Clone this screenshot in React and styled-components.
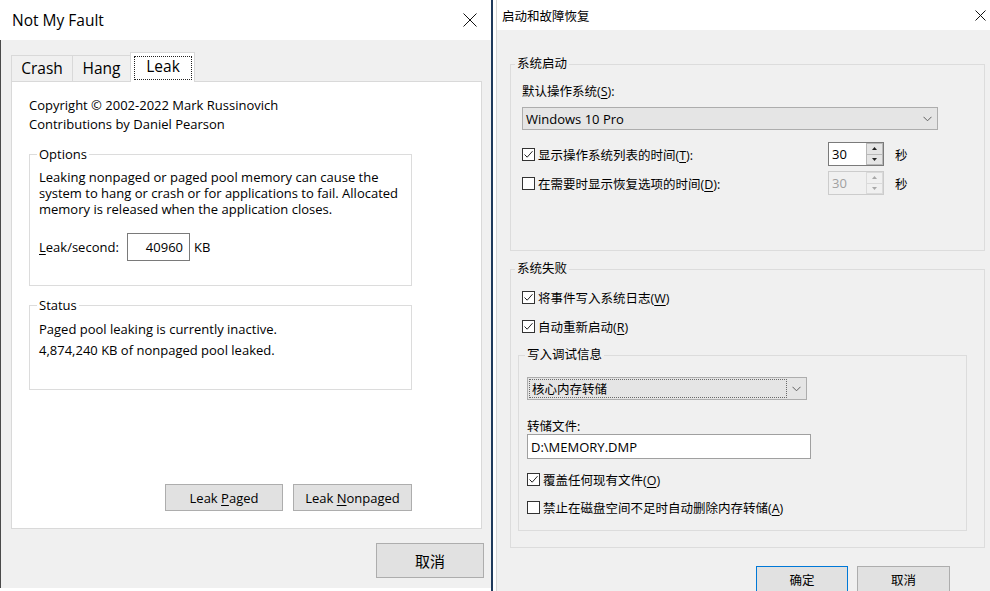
import React from 'react';
import styled, { createGlobalStyle } from 'styled-components';

const FONT = `"Open Sans", "Noto Sans CJK SC", sans-serif`;

const GlobalStyle = createGlobalStyle`
  html, body { margin: 0; padding: 0; background: #fff; }
  body { width: 990px; height: 591px; overflow: hidden; font-family: ${FONT}; color: #000; }
  * { box-sizing: border-box; }
`;

const Screen = styled.div`
  display: flex;
  width: 990px;
  height: 591px;
  background: #fff;
  overflow: hidden;
`;

/* ---------- shared ---------- */
const TitleBar = styled.div`
  height: ${p => p.$h}px;
  flex-shrink: 0;
  background: #fff;
  display: flex;
  align-items: center;
  justify-content: space-between;
  padding-left: ${p => p.$pl}px;
  padding-right: ${p => p.$pr}px;
  font-size: ${p => p.$fs}px;
  white-space: nowrap;
`;

const U = styled.span`
  text-decoration: underline;
  text-underline-offset: 2px;
  text-decoration-thickness: 1px;
`;

const ButtonEl = styled.button`
  width: ${p => p.$w}px;
  height: ${p => p.$h}px;
  background: #e1e1e1;
  border: 1px solid ${p => (p.$default ? '#0078d7' : '#adadad')};
  font-family: ${FONT};
  font-size: ${p => p.$fs}px;
  color: #000;
  padding: 0;
  display: flex;
  align-items: center;
  justify-content: center;
  flex-shrink: 0;
  white-space: pre;
`;

function Button({ children, ...rest }) {
  return (
    <ButtonEl {...rest}>
      <span>{children}</span>
    </ButtonEl>
  );
}

function CloseIcon({ size }) {
  return (
    <svg width={size} height={size} viewBox={`0 0 ${size} ${size}`}>
      <path d={`M0.5 0.5 L${size - 0.5} ${size - 0.5} M${size - 0.5} 0.5 L0.5 ${size - 0.5}`} stroke="#111" strokeWidth="1" fill="none" />
    </svg>
  );
}

/* ---------- left window ---------- */
const LeftWin = styled.div`
  width: 491px;
  height: 588px;
  flex-shrink: 0;
  display: flex;
  flex-direction: column;
  background: #f0f0f0;
`;

const LeftBody = styled.div`
  flex: 1;
  display: flex;
  flex-direction: column;
  border-left: 1px solid #4a4a4a;
`;

const LeftMain = styled.div`
  padding: 12px 9px 0 10px;
  display: flex;
  flex-direction: column;
`;

const TabStrip = styled.div`
  display: flex;
  align-items: flex-start;
  height: 30px;
  margin-bottom: -1px;
  position: relative;
  z-index: 1;
`;

const Tab = styled.div`
  width: ${p => p.$w}px;
  margin-left: ${p => (p.$first ? 0 : -1)}px;
  margin-top: ${p => (p.$active ? 0 : 3)}px;
  height: ${p => (p.$active ? 30 : 26)}px;
  padding: ${p => (p.$active ? '3px 2px 2px 3px' : '0 0 1px 0')};
  background: ${p => (p.$active ? '#fff' : '#f0f0f0')};
  border: 1px solid #d9d9d9;
  border-bottom: none;
  font-size: 15.5px;
  display: flex;
  align-items: center;
  justify-content: center;
`;

const FocusRect = styled.span`
  flex: 1;
  align-self: stretch;
  border: 1px dotted #222;
  display: flex;
  align-items: center;
  justify-content: center;
  padding-bottom: 4px;
`;

const TabPanel = styled.div`
  height: 448px;
  background: #fff;
  border: 1px solid #d9d9d9;
  padding: 14px 0 17px 17px;
  display: flex;
  flex-direction: column;
  font-size: 13px;
`;

const Para = styled.div`
  line-height: ${p => p.$lh}px;
  white-space: nowrap;
`;

const LGroup = styled.fieldset`
  width: 383px;
  margin: ${p => p.$mt}px 0 0 0;
  padding: 0;
  border: 1px solid #dcdcdc;
  min-width: 0;
`;

const LLegend = styled.legend`
  margin-left: 7px;
  padding: 0 2px;
  line-height: 19px;
  font-size: 13px;
`;

const LGroupBody = styled.div`
  padding: ${p => p.$pt}px 0 ${p => p.$pb}px 9px;
`;

const LeakRow = styled.div`
  display: flex;
  align-items: center;
  margin-top: 16px;
`;

const LeakLabel = styled.span`
  width: 88px;
`;

const NumBox = styled.div`
  width: 63px;
  height: 28px;
  border: 1px solid #7a7a7a;
  background: #fff;
  display: flex;
  align-items: center;
  justify-content: flex-end;
  padding-right: 6px;
  margin-right: 4px;
`;

const PanelButtons = styled.div`
  width: 383px;
  margin-top: auto;
  display: flex;
  justify-content: flex-end;
  gap: 10px;
`;

const LeftFooter = styled.div`
  display: flex;
  justify-content: flex-end;
  padding: 14px 7px 0 0;
`;

/* ---------- separator ---------- */
const WinGap = styled.div`
  width: 5px;
  flex-shrink: 0;
  border-left: 2px solid #1f3a5c;
  background: #fff;
`;

/* ---------- right window ---------- */
const RightWin = styled.div`
  flex: 1;
  display: flex;
  flex-direction: column;
  border-left: 1px solid #d6d6d6;
  font-size: 12.5px;
`;

const RightBody = styled.div`
  flex: 1;
  background: #f0f0f0;
  padding: 0 5px 0 13px;
  display: flex;
  flex-direction: column;
`;

const Group = styled.fieldset`
  width: ${p => p.$w}px;
  margin: ${p => p.$mt}px 0 0 ${p => p.$ml || 0}px;
  padding: 0;
  border: 1px solid #dcdcdc;
  min-width: 0;
`;

const Legend = styled.legend`
  margin-left: ${p => p.$ml}px;
  padding: 0 2px;
  line-height: 16px;
`;

const GroupBody = styled.div`
  padding: ${p => p.$pt}px 0 ${p => p.$pb}px ${p => p.$pl}px;
  display: flex;
  flex-direction: column;
  align-items: flex-start;
`;

const Label = styled.div`
  line-height: ${p => p.$lh || 16}px;
  margin-top: ${p => p.$mt || 0}px;
  white-space: nowrap;
`;

const Combo = styled.div`
  width: ${p => p.$w}px;
  height: 23px;
  margin-top: ${p => p.$mt}px;
  background: #e5e5e5;
  border: 1px solid #adadad;
  display: flex;
  align-items: center;
  padding: 0 0 0 ${p => (p.$focus ? 1 : 3)}px;
`;

const ComboText = styled.div`
  flex: 1;
  align-self: stretch;
  display: flex;
  align-items: center;
  padding-left: ${p => (p.$focus ? 2 : 0)}px;
  margin: ${p => (p.$focus ? '1px 0' : '0')};
  border: ${p => (p.$focus ? '1px dotted #6a6a6a' : 'none')};
  font-size: ${p => (p.$focus ? 12.5 : 13)}px;
`;

const ChevronBox = styled.div`
  width: 19px;
  display: flex;
  align-items: center;
  justify-content: center;
`;

function Chevron() {
  return (
    <svg width="9" height="6" viewBox="0 0 9 6">
      <path d="M0.5 0.8 L4.5 4.8 L8.5 0.8" stroke="#606060" strokeWidth="1" fill="none" />
    </svg>
  );
}

const SpinRow = styled.div`
  display: flex;
  align-items: center;
  margin-top: ${p => p.$mt}px;
  height: 24px;
`;

const SpinLabelCell = styled.div`
  width: 306px;
  flex-shrink: 0;
`;

const Unit = styled.span`
  margin-left: 11px;
`;

const CheckRowEl = styled.div`
  display: flex;
  align-items: center;
  gap: 3px;
  height: 16px;
  margin-top: ${p => p.$mt || 0}px;
  white-space: nowrap;
`;

const CheckBox = styled.span`
  width: 13px;
  height: 13px;
  border: 1px solid #333;
  background: #fff;
  display: inline-flex;
  align-items: center;
  justify-content: center;
  flex-shrink: 0;
`;

function CheckRow({ checked, children, $mt }) {
  return (
    <CheckRowEl $mt={$mt}>
      <CheckBox>
        {checked && (
          <svg width="11" height="11" viewBox="0 0 11 11">
            <path d="M1.5 5.5 L4.2 8.2 L9.5 2.2" stroke="#222" strokeWidth="1" fill="none" />
          </svg>
        )}
      </CheckBox>
      <span>{children}</span>
    </CheckRowEl>
  );
}

const SpinBox = styled.div`
  width: 56px;
  height: 24px;
  flex-shrink: 0;
  display: flex;
  border: 1px solid ${p => (p.$disabled ? '#cccccc' : '#7a7a7a')};
  background: ${p => (p.$disabled ? '#f0f0f0' : '#fff')};
  color: ${p => (p.$disabled ? '#a0a0a0' : '#000')};
  font-size: 13px;
`;

const SpinValue = styled.div`
  flex: 1;
  display: flex;
  align-items: center;
  padding-left: 3px;
`;

const SpinButtons = styled.div`
  width: 17px;
  display: flex;
  flex-direction: column;
`;

const SpinBtn = styled.div`
  flex: 1;
  background: ${p => (p.$disabled ? '#f0f0f0' : '#e5e5e5')};
  border: 1px solid ${p => (p.$disabled ? '#dadada' : '#b8b8b8')};
  border-top: ${p => (p.$down ? 'none' : undefined)};
  display: flex;
  align-items: center;
  justify-content: center;
`;

function Arrow({ down, color }) {
  return (
    <svg width="5" height="3" viewBox="0 0 5 3">
      <path d={down ? 'M0 0 L5 0 L2.5 3 Z' : 'M0 3 L5 3 L2.5 0 Z'} fill={color} />
    </svg>
  );
}

function Spin({ value, disabled }) {
  const c = disabled ? '#a8a8a8' : '#222';
  return (
    <SpinBox $disabled={disabled}>
      <SpinValue>{value}</SpinValue>
      <SpinButtons>
        <SpinBtn $disabled={disabled}><Arrow color={c} /></SpinBtn>
        <SpinBtn $disabled={disabled} $down><Arrow down color={c} /></SpinBtn>
      </SpinButtons>
    </SpinBox>
  );
}

const TextBox = styled.div`
  width: 284px;
  height: 25px;
  background: #fff;
  border: 1px solid #a0a0a0;
  display: flex;
  align-items: center;
  padding-left: 3px;
  font-size: 13px;
`;

const DialogButtons = styled.div`
  display: flex;
  justify-content: flex-end;
  gap: 9px;
  margin: 18px 35px 0 0;
`;

export default function App() {
  return (
    <>
      <GlobalStyle />
      <Screen>
        <LeftWin>
          <TitleBar $h={40} $pl={12} $pr={14} $fs={15.5}>
            <span>Not My Fault</span>
            <CloseIcon size={14} />
          </TitleBar>
          <LeftBody>
            <LeftMain>
              <TabStrip>
                <Tab $w={62} $first>Crash</Tab>
                <Tab $w={59}>Hang</Tab>
                <Tab $w={65} $active><FocusRect>Leak</FocusRect></Tab>
              </TabStrip>
              <TabPanel>
                <Para $lh={19}>
                  Copyright © 2002-2022 Mark Russinovich<br />
                  Contributions by Daniel Pearson
                </Para>
                <LGroup $mt={11}>
                  <LLegend>Options</LLegend>
                  <LGroupBody $pt={5} $pb={24}>
                    <Para $lh={16}>
                      Leaking nonpaged or paged pool memory can cause the<br />
                      system to hang or crash or for applications to fail. Allocated<br />
                      memory is released when the application closes.
                    </Para>
                    <LeakRow>
                      <LeakLabel><U>L</U>eak/second:</LeakLabel>
                      <NumBox>40960</NumBox>
                      <span>KB</span>
                    </LeakRow>
                  </LGroupBody>
                </LGroup>
                <LGroup $mt={10}>
                  <LLegend>Status</LLegend>
                  <LGroupBody $pt={4} $pb={28}>
                    <Para $lh={21}>
                      Paged pool leaking is currently inactive.<br />
                      4,874,240 KB of nonpaged pool leaked.
                    </Para>
                  </LGroupBody>
                </LGroup>
                <PanelButtons>
                  <Button $w={118} $h={27} $fs={13}>Leak <U>P</U>aged</Button>
                  <Button $w={119} $h={27} $fs={13}>Leak <U>N</U>onpaged</Button>
                </PanelButtons>
              </TabPanel>
            </LeftMain>
            <LeftFooter>
              <Button $w={108} $h={35} $fs={15}>取消</Button>
            </LeftFooter>
          </LeftBody>
        </LeftWin>

        <WinGap />

        <RightWin>
          <TitleBar $h={30} $pl={5} $pr={4} $fs={12.5}>
            <span>启动和故障恢复</span>
            <CloseIcon size={11} />
          </TitleBar>
          <RightBody>
            <Group $w={475} $mt={26}>
              <Legend $ml={4}>系统启动</Legend>
              <GroupBody $pt={12} $pl={11} $pb={55}>
                <Label>默认操作系统(<U>S</U>):</Label>
                <Combo $w={416} $mt={7}>
                  <ComboText>Windows 10 Pro</ComboText>
                  <ChevronBox><Chevron /></ChevronBox>
                </Combo>
                <SpinRow $mt={12}>
                  <SpinLabelCell>
                    <CheckRow checked>显示操作系统列表的时间(<U>T</U>):</CheckRow>
                  </SpinLabelCell>
                  <Spin value="30" />
                  <Unit>秒</Unit>
                </SpinRow>
                <SpinRow $mt={5}>
                  <SpinLabelCell>
                    <CheckRow>在需要时显示恢复选项的时间(<U>D</U>):</CheckRow>
                  </SpinLabelCell>
                  <Spin value="30" disabled />
                  <Unit>秒</Unit>
                </SpinRow>
              </GroupBody>
            </Group>

            <Group $w={475} $mt={10}>
              <Legend $ml={4}>系统失败</Legend>
              <GroupBody $pt={12} $pl={11} $pb={16}>
                <CheckRow checked>将事件写入系统日志(<U>W</U>)</CheckRow>
                <CheckRow checked $mt={13}>自动重新启动(<U>R</U>)</CheckRow>
                <Group $w={449} $mt={13} $ml={-4}>
                  <Legend $ml={6}>写入调试信息</Legend>
                  <GroupBody $pt={14} $pl={8} $pb={15}>
                    <Combo $w={280} $mt={0} $focus>
                      <ComboText $focus>核心内存转储</ComboText>
                      <ChevronBox><Chevron /></ChevronBox>
                    </Combo>
                    <Label $mt={20} $lh={14}>转储文件:</Label>
                    <TextBox>D:\MEMORY.DMP</TextBox>
                    <CheckRow checked $mt={12}>覆盖任何现有文件(<U>O</U>)</CheckRow>
                    <CheckRow $mt={12}>禁止在磁盘空间不足时自动删除内存转储(<U>A</U>)</CheckRow>
                  </GroupBody>
                </Group>
              </GroupBody>
            </Group>

            <DialogButtons>
              <Button $w={92} $h={26} $fs={12.5} $default>确定</Button>
              <Button $w={93} $h={26} $fs={12.5}>取消</Button>
            </DialogButtons>
          </RightBody>
        </RightWin>
      </Screen>
    </>
  );
}
